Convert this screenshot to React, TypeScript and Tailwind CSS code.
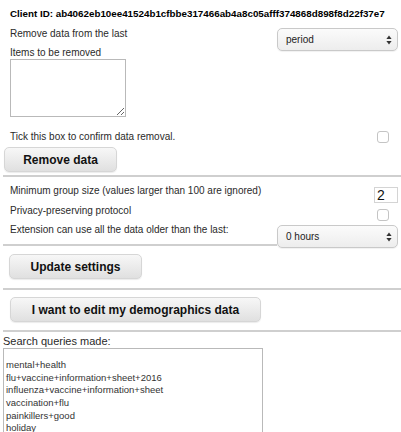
import React from 'react';

const queries = [
    'mental+health',
    'flu+vaccine+information+sheet+2016',
    'influenza+vaccine+information+sheet',
    'vaccination+flu',
    'painkillers+good',
    'holiday',
].join('\n');

const Arrows: React.FC = () => (
    <svg width="6" height="10" viewBox="0 0 6 10" className="shrink-0">
        <path d="M3 0.5 L5.6 4 L0.4 4 Z" fill="#333" />
        <path d="M3 9.5 L5.6 6 L0.4 6 Z" fill="#333" />
    </svg>
);

const FakeSelect: React.FC<{ value: string; className?: string }> = ({ value, className = '' }) => (
    <div
        className={`flex items-center justify-between w-[121px] h-[23px] pl-[8px] pr-[5px] rounded-[5px] border border-[#c9c9c9] bg-gradient-to-b from-[#fbfbfb] to-[#ededed] shadow-[0_1px_1px_rgba(0,0,0,0.06)] text-[10px] text-[#222] ${className}`}
    >
        <span>{value}</span>
        <Arrows />
    </div>
);

const Checkbox: React.FC<{ className?: string }> = ({ className = '' }) => (
    <div className={`w-[12px] h-[12px] rounded-[3px] border border-[#c4c4c4] bg-white ${className}`} />
);

const Button: React.FC<{ label: string; className?: string }> = ({ label, className = '' }) => (
    <button
        className={`h-[25px] rounded-[5px] border border-[#d6d6d6] bg-gradient-to-b from-[#f7f7f7] to-[#e0e0e0] shadow-[0_1px_1px_rgba(0,0,0,0.08)] text-[12px] font-bold text-[#111] flex items-center justify-center ${className}`}
    >
        {label}
    </button>
);

const Divider: React.FC<{ className?: string }> = ({ className = '' }) => (
    <div className={`ml-[3px] h-[2px] bg-[#cfcfcf] ${className}`} />
);

const App: React.FC = () => {
    return (
        <div className="w-[401px] h-[432px] overflow-hidden bg-white text-[#2a2a2a] font-['Liberation_Sans',Arial,sans-serif] text-[10px]">
            {/* client id */}
            <div className="pt-[7px] pl-[10px] leading-[14px] font-bold text-[9.8px] text-black whitespace-nowrap">
                Client ID: ab4062eb10ee41524b1cfbbe317466ab4a8c05afff374868d898f8d22f37e7
            </div>

            {/* removal form */}
            <div className="flex justify-between items-start pl-[10px] pr-[3px] mt-[7px]">
                <div className="flex flex-col">
                    <div className="leading-[12px]">Remove data from the last</div>
                    <div className="leading-[12px] mt-[7px]">Items to be removed</div>
                    <textarea
                        readOnly
                        className="mt-0 w-[116px] h-[58px] border border-[#b9b9b9] bg-white resize-y outline-none"
                    />
                </div>
                <FakeSelect value="period" />
            </div>

            <div className="flex justify-between items-center pl-[10px] pr-[12px] mt-[13px] h-[13px]">
                <span className="leading-[12px]">Tick this box to confirm data removal.</span>
                <Checkbox />
            </div>

            <Button label="Remove data" className="ml-[4px] mt-[4px] w-[113px]" />

            <Divider className="mt-[3px]" />

            {/* settings */}
            <div className="flex justify-between items-start pl-[10px] pr-[3px] mt-[8px]">
                <span className="leading-[12px]">Minimum group size (values larger than 100 are ignored)</span>
                <div className="mt-[2px] w-[24px] h-[16px] border border-[#d4d4d4] bg-white text-[14px] leading-[14px] pl-[2px] text-[#111]">
                    2
                </div>
            </div>

            <div className="flex justify-between items-start pl-[10px] pr-[12px] mt-[2px]">
                <span className="leading-[12px]">Privacy-preserving protocol</span>
                <Checkbox className="mt-[4px]" />
            </div>

            <div className="flex items-start ml-[3px] pr-[3px] mt-[3px]">
                <div className="flex-1 h-[22px] border-b-2 border-[#cfcfcf] pl-[7px] leading-[12px]">
                    Extension can use all the data older than the last:
                </div>
                <FakeSelect value="0 hours" className="mt-[1px]" />
            </div>

            <Button label="Update settings" className="ml-[9px] mt-[6px] w-[133px]" />

            <Divider className="mt-[9px]" />

            <Button label="I want to edit my demographics data" className="ml-[10px] mt-[7px] w-[251px]" />

            <Divider className="mt-[8px]" />

            {/* query history */}
            <div className="pl-[3px] mt-[3px] leading-[12px] text-[11px]">Search queries made:</div>
            <textarea
                readOnly
                defaultValue={queries}
                className="block ml-[3px] mt-[1px] w-[260px] h-[110px] border border-[#b9b9b9] bg-white px-[2px] pt-[10px] text-[9.5px] leading-[12.65px] text-[#333] outline-none resize-y font-['Liberation_Sans',Arial,sans-serif]"
            />
        </div>
    );
};

export default App;
